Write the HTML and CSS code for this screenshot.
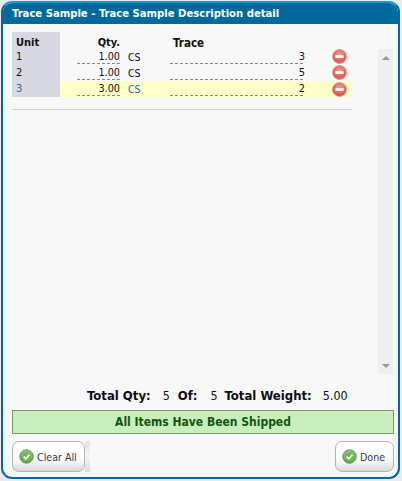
FILE: index.html
```html
<!DOCTYPE html>
<html lang="en">
<head>
<meta charset="utf-8">
<title>Trace Sample</title>
<link rel="stylesheet" href="styles.css">
</head>
<body>
<div class="window">
  <div class="titlebar">Trace Sample - Trace Sample Description detail</div>
  <div class="content">
    <div class="main">
      <div class="list">
        <div class="table">
          <div class="row head">
            <div class="unit">Unit</div>
            <div class="qty">Qty.</div>
            <div class="uom"></div>
            <div class="trace-head">Trace</div>
          </div>
          <div class="row">
            <div class="unit">1</div>
            <div class="qty dashed"><span>1.00</span></div>
            <div class="uom">CS</div>
            <div class="trace dashed"><span>3</span></div>
            <svg class="remove" viewBox="0 0 16 16"><use href="#minus"/></svg>
          </div>
          <div class="row">
            <div class="unit">2</div>
            <div class="qty dashed"><span>1.00</span></div>
            <div class="uom">CS</div>
            <div class="trace dashed"><span>5</span></div>
            <svg class="remove" viewBox="0 0 16 16"><use href="#minus"/></svg>
          </div>
          <div class="row selected">
            <div class="unit">3</div>
            <div class="qty dashed"><span>3.00</span></div>
            <div class="uom">CS</div>
            <div class="trace dashed"><span>2</span></div>
            <svg class="remove" viewBox="0 0 16 16"><use href="#minus"/></svg>
          </div>
        </div>
        <div class="rule"></div>
      </div>
      <div class="scrollbar">
        <div class="arrow up"></div>
        <div class="arrow down"></div>
      </div>
    </div>
    <div class="totals">
      <b>Total Qty:</b><span class="v1">5</span><b class="of">Of:</b><span class="v2">5</span><b class="tw">Total Weight:</b><span class="v3">5.00</span>
    </div>
    <div class="status">All Items Have Been Shipped</div>
    <div class="actions">
      <div class="left-group">
        <div class="btn">
          <svg class="check" viewBox="0 0 16 16"><use href="#ok"/></svg>Clear All
        </div>
        <div class="stub"></div>
      </div>
      <div class="btn done">
        <svg class="check" viewBox="0 0 16 16"><use href="#ok"/></svg>Done
      </div>
    </div>
  </div>
</div>
<svg class="defs" width="0" height="0">
  <defs>
    <radialGradient id="redg" cx="50%" cy="35%" r="70%">
      <stop offset="0" stop-color="#f59a8e"/>
      <stop offset="1" stop-color="#d9453a"/>
    </radialGradient>
    <radialGradient id="greeng" cx="50%" cy="35%" r="70%">
      <stop offset="0" stop-color="#a8dc8c"/>
      <stop offset="1" stop-color="#4f9f3c"/>
    </radialGradient>
    <symbol id="minus" viewBox="0 0 16 16">
      <circle cx="8" cy="8" r="7.3" fill="url(#redg)" stroke="#cf8078" stroke-width="1"/>
      <rect x="3.6" y="6.6" width="8.8" height="2.8" fill="#fff"/>
    </symbol>
    <symbol id="ok" viewBox="0 0 16 16">
      <circle cx="8" cy="8" r="7.2" fill="url(#greeng)" stroke="#5f9a55" stroke-width="1"/>
      <circle cx="8" cy="8" r="4.8" fill="#6fb858"/>
      <path d="M5 8.2l2.2 2.2L11.2 6" fill="none" stroke="#fff" stroke-width="1.8"/>
    </symbol>
  </defs>
</svg>
</body>
</html>
```
FILE: styles.css
```css
* { box-sizing: border-box; }
html, body { height: 100%; }
body {
  margin: 0;
  padding: 1px 2px 2px 1px;
  background: #e8ecee;
  font-family: "DejaVu Sans Condensed", "DejaVu Sans", sans-serif;
  font-size: 11px;
  color: #111;
  overflow: hidden;
}
.window {
  height: 478px;
  display: flex;
  flex-direction: column;
  background: #f8f8f8;
  border: 2px solid #006a9e;
  border-top-color: #1d9ac7;
  border-radius: 11px;
  overflow: hidden;
}
.titlebar {
  height: 21px;
  flex: none;
  padding: 3px 0 0 9px;
  background: #006a9e;
  color: #fff;
  font-weight: bold;
  font-size: 11.2px;
  line-height: 15px;
}
.content {
  flex: 1;
  display: flex;
  flex-direction: column;
  padding: 8px 5px 8px 9px;
}
.main { display: flex; height: 342px; flex: none; }
.list { width: 340px; flex: none; }
.table { display: flex; flex-direction: column; }
.row {
  position: relative;
  display: grid;
  grid-template-columns: 48px 60px 50px 135px;
  grid-template-rows: 100%;
  height: 16px;
  line-height: 18px;
}
.row.head { font-weight: bold; line-height: 22px; }
.row.selected { height: 17px; background: linear-gradient(transparent 1px, #ffffc8 1px); }
.row.selected .unit, .row.selected .uom { color: #1f6ea8; }
.unit { background: #d8d8e2; padding-left: 4px; }
.qty { margin-left: 17px; text-align: right; }
.uom { padding-left: 8px; font-size: 10.5px; }
.trace-head { margin-left: 3px; grid-column: 4; font-size: 11.5px; }
.trace { margin-left: 0; text-align: right; }
.dashed {
  height: 16px;
  background: repeating-linear-gradient(90deg, #888 0 3px, transparent 3px 5px) left bottom / 100% 1px no-repeat;
}
.qty span, .trace span { color: #201018; }
.qty span { font-size: 10.8px; }
.remove {
  position: absolute;
  left: 320px;
  top: 1px;
  width: 15px;
  height: 15px;
}
.selected .remove { top: 2px; }
.rule { height: 1px; margin-top: 12px; background: #d0d0d0; }
.scrollbar {
  width: 16px;
  margin: 17px 0 0 26px;
  background: #efefef;
  display: flex;
  flex-direction: column;
  justify-content: space-between;
  padding: 7px 0 6px;
  align-items: center;
}
.arrow { width: 0; height: 0; border-left: 4px solid transparent; border-right: 4px solid transparent; }
.arrow.up { border-bottom: 4px solid #999; }
.arrow.down { border-top: 4px solid #999; }
.totals {
  display: flex;
  height: 22px;
  flex: none;
  margin-top: 14px;
  font-size: 12.4px;
  line-height: 16px;
  padding-left: 75px;
}
.totals b { font-weight: bold; font-size: 13px; color: #0c0c14; }
.v1 { margin-left: 12px; }
.totals .of { margin-left: 8px; }
.v2 { margin-left: 13px; }
.totals .tw { margin-left: 7px; }
.v3 { margin-left: 11px; }
.status {
  height: 24px;
  flex: none;
  width: 382px;
  background: #c9eebd;
  border: 1px solid #7b9a72;
  color: #115511;
  font-weight: bold;
  font-size: 12px;
  line-height: 22px;
  text-align: center;
}
.actions {
  display: flex;
  justify-content: space-between;
  width: 382px;
  margin-top: 7px;
}
.left-group { display: flex; }
.btn {
  display: flex;
  align-items: center;
  gap: 3px;
  height: 31px;
  width: 73px;
  padding-left: 6px;
  border: 1px solid #b4b4b4;
  border-radius: 7px;
  background: linear-gradient(#fff 0, #fff 55%, #f0f0f0 75%, #d9d9d9 100%);
  color: #30384a;
  font-size: 10.6px;
}
.btn.done { width: 59px; }
.check { width: 15px; height: 15px; flex: none; }
.stub {
  width: 5px;
  height: 31px;
  background: linear-gradient(#e4e4e4 0, #f4f4f4 50%, #dcdcdc 100%);
}
.defs { position: absolute; }
```
